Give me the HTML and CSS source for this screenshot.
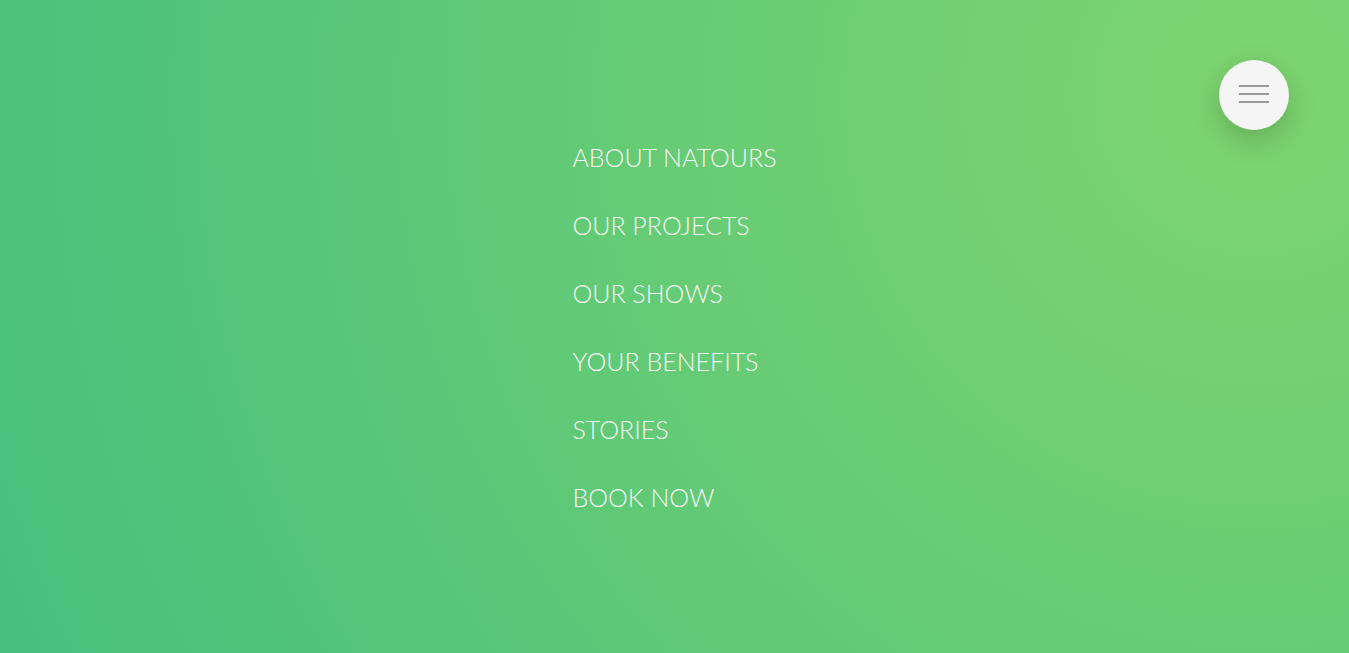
FILE: index.html
```html
<!DOCTYPE html>
<html lang="en">
<head>
<meta charset="utf-8">
<meta name="viewport" content="width=device-width, initial-scale=1">
<title>Natours</title>
<link rel="stylesheet" href="styles.css">
</head>
<body>
<div class="navigation">
  <button class="navigation__button" type="button" aria-label="Menu" aria-expanded="true"><span class="navigation__icon"></span></button>
  <nav class="navigation__nav">
    <ul class="navigation__list">
      <li><a href="#about" class="navigation__link">About Natours</a></li>
      <li><a href="#projects" class="navigation__link">Our Projects</a></li>
      <li><a href="#shows" class="navigation__link">Our Shows</a></li>
      <li><a href="#benefits" class="navigation__link">Your Benefits</a></li>
      <li><a href="#stories" class="navigation__link">Stories</a></li>
      <li><a href="#book" class="navigation__link">Book Now</a></li>
    </ul>
  </nav>
</div>
</body>
</html>
```

FILE: styles.css
```css
* {
  box-sizing: border-box;
  margin: 0;
  padding: 0;
}

body {
  font-family: Lato, sans-serif;
  font-weight: 300;
}

.navigation {
  position: relative;
  min-height: 100vh;
  display: grid;
  place-items: center;
  background-image: radial-gradient(circle 2140px at right 95px top 95px, #7ed56f, #28b485);
}

.navigation__button {
  position: absolute;
  top: 60px;
  right: 60px;
  width: 70px;
  height: 70px;
  border: 0;
  border-radius: 50%;
  background-color: #f5f5f5;
  box-shadow: 0 10px 30px rgba(0, 0, 0, 0.2);
  display: grid;
  place-items: center;
  cursor: pointer;
}

.navigation__icon {
  width: 30px;
  height: 18px;
  margin-bottom: 2px;
  border-top: 2px solid #999;
  border-bottom: 2px solid #999;
  background: linear-gradient(#999, #999) center / 30px 2px no-repeat;
}

.navigation__list {
  list-style: none;
  display: grid;
  justify-items: start;
  gap: 30px;
}

.navigation__link {
  display: block;
  font-size: 25px;
  line-height: 38px;
  color: #f7f7f7;
  text-decoration: none;
  text-transform: uppercase;
}
```
